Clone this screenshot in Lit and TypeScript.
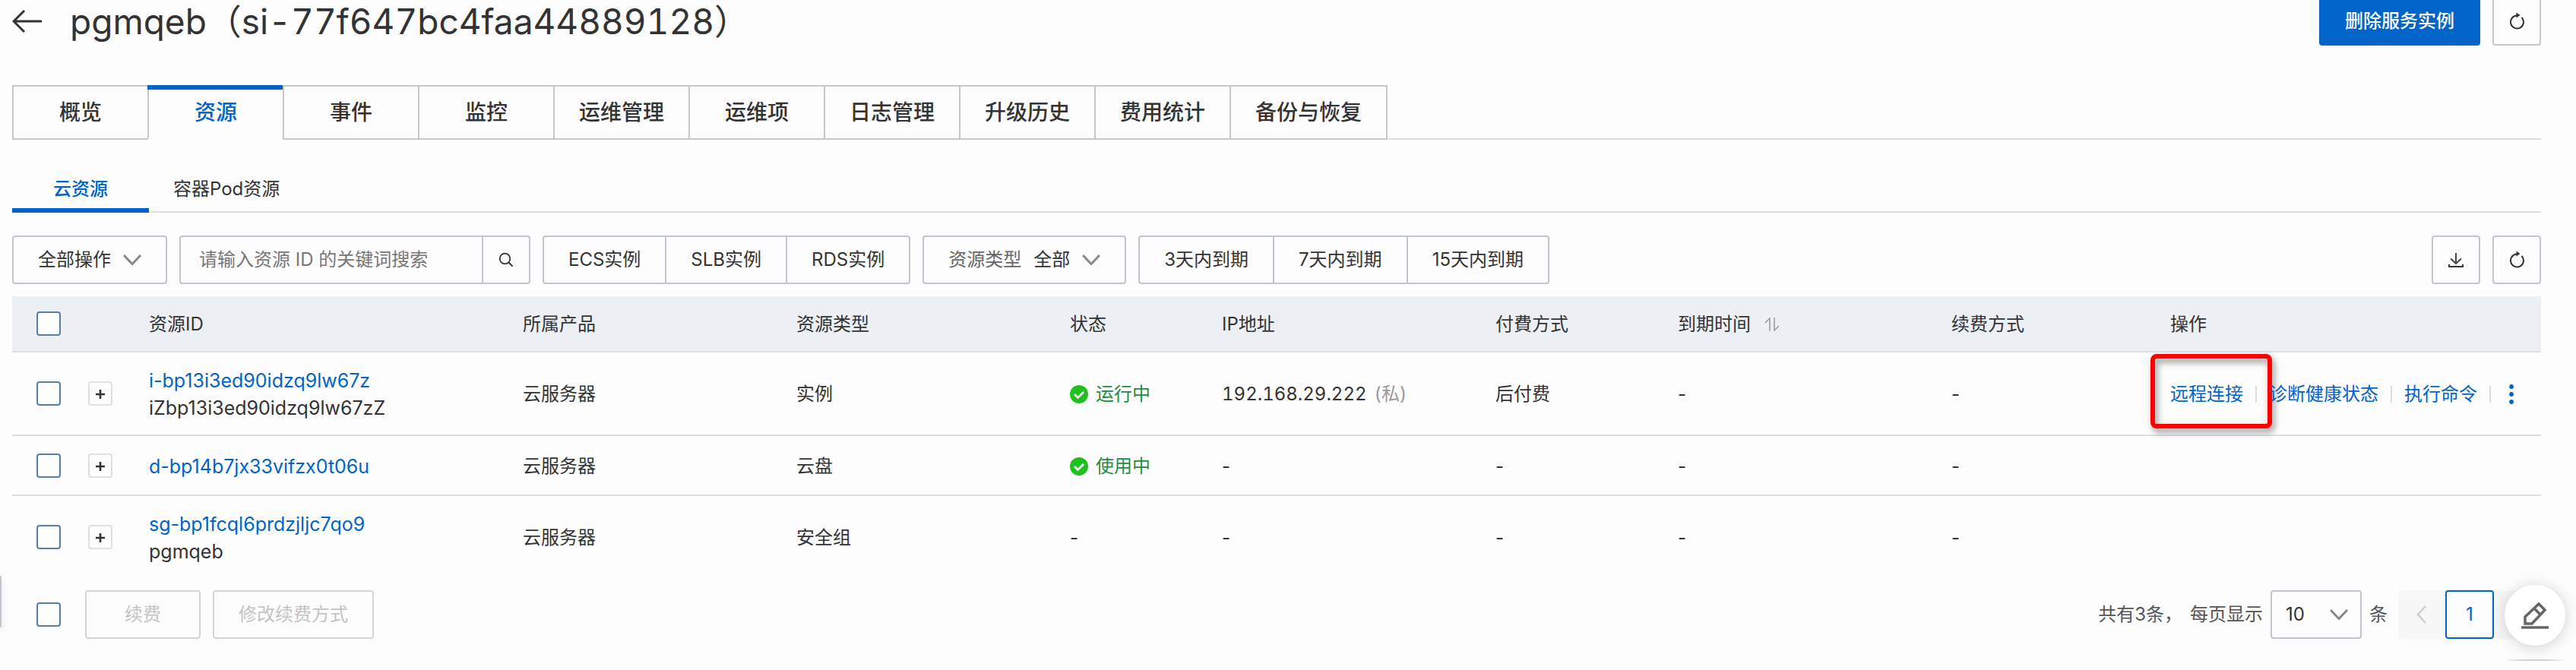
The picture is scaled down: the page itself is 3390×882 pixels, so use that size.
import { LitElement, html, css, svg, nothing } from "lit";
import { customElement, state } from "lit/decorators.js";
import { classMap } from "lit/directives/class-map.js";

interface Resource {
  id: string;
  name?: string;
  type: string;
  status?: string;
  ip?: string;
  charge?: string;
  actions?: string[];
}

const TABS = ["概览", "资源", "事件", "监控", "运维管理", "运维项", "日志管理", "升级历史", "费用统计", "备份与恢复"];
const SUB_TABS = ["云资源", "容器Pod资源"];
const PRODUCTS = ["ECS实例", "SLB实例", "RDS实例"];
const EXPIRY = ["3天内到期", "7天内到期", "15天内到期"];

const RESOURCES: Resource[] = [
  {
    id: "i-bp13i3ed90idzq9lw67z",
    name: "iZbp13i3ed90idzq9lw67zZ",
    type: "实例",
    status: "运行中",
    ip: "192.168.29.222",
    charge: "后付费",
    actions: ["远程连接", "诊断健康状态", "执行命令"],
  },
  { id: "d-bp14b7jx33vifzx0t06u", type: "云盘", status: "使用中" },
  { id: "sg-bp1fcql6prdzjljc7qo9", name: "pgmqeb", type: "安全组" },
];

const icon = (w: number, h: number, body: unknown) => html`
  <svg width=${w} height=${h} viewBox="0 0 ${w} ${h}" fill="none" aria-hidden="true">${body}</svg>
`;

const backIcon = icon(40, 32, svg`
  <path d="M16 2 L2 16 L16 30 M2 16 H39" stroke="#333" stroke-width="3" />`);
const chevronDown = icon(24, 14, svg`
  <path d="M1 1 L12 12.500 L23 1" stroke="#888" stroke-width="3" />`);
const chevronLeft = icon(14, 24, svg`
  <path d="M12 1 L2 12 L12 23" stroke="#ccc" stroke-width="2.500" />`);
const refreshIcon = icon(20, 24, svg`
  <path d="M16.500 7 A8.500 8.500 0 1 1 10 4.500" stroke="#333" stroke-width="2" />
  <path d="M9.500 0.500 L14.500 4 L9.500 7.500 Z" fill="#333" />`);
const downloadIcon = icon(20, 20, svg`
  <path d="M10 1 V15 M3 8.500 L10 15 L17 8.500" stroke="#444" stroke-width="2" />
  <path d="M1 16 V19 H19 V16" stroke="#333" stroke-width="2" />`);
const searchIcon = icon(20, 20, svg`
  <circle cx="8.500" cy="8.500" r="6.800" stroke="#333" stroke-width="1.800" />
  <path d="M13.500 13.500 L18.500 18.500" stroke="#333" stroke-width="1.800" />`);
const plusIcon = icon(12, 14, svg`
  <path d="M6 1 V13 M0 7 H12" stroke="#333" stroke-width="2.600" />`);
const sortIcon = icon(20, 20, svg`
  <path d="M1 8 L7 2 V19 M19 12 L13 18 V1" stroke="#999" stroke-width="1.500" />`);
const okIcon = icon(24, 24, svg`
  <circle cx="12" cy="12" r="12" fill="#1fc11f" />
  <path d="M6 12 L10.500 16.500 L18 9" stroke="#fff" stroke-width="2.600" />`);
const moreIcon = icon(6, 26, svg`
  <circle cx="3" cy="3" r="2.900" fill="#0064c8" />
  <circle cx="3" cy="13" r="2.900" fill="#0064c8" />
  <circle cx="3" cy="23" r="2.900" fill="#0064c8" />`);
const pencilIcon = icon(36, 36, svg`
  <path d="M5 29 V20 L23 3 L31 11 L14 29 Z M17 9 L25 17" stroke="#666" stroke-width="3.500" />
  <path d="M0 34 H36" stroke="#666" stroke-width="3.500" />`);

@customElement("app-root")
export class AppRoot extends LitElement {
  @state() private tab = 1;
  @state() private subTab = 0;

  static styles = css`
    :host {
      --blue: #0064c8;
      --text: #333;
      --line: #dedede;
      --field: #c0c6cf;
      --page: #fdfdfd;
      display: block;
      position: relative;
      box-sizing: border-box;
      min-height: 100vh;
      padding: 0 46px 0 16px;
      overflow: hidden;
      background: var(--page);
      color: var(--text);
      font: 24px/36px Inter, "Noto Sans CJK SC", sans-serif;
    }
    * { box-sizing: border-box; }
    svg { display: block; flex: none; }
    button, input, select {
      margin: 0;
      font: inherit;
      color: inherit;
    }
    button { cursor: pointer; }
    a { color: var(--blue); text-decoration: none; }

    .header {
      display: flex;
      align-items: center;
      gap: 16px;
      height: 64px;
      margin: -4px 0 52px;
    }
    .back {
      display: flex;
      padding: 0;
      margin-right: 20px;
      border: 0;
      background: none;
    }
    .title {
      flex: 1;
      margin: 0;
      font-size: 46px;
      line-height: 60px;
      font-weight: 400;
      font-variant-numeric: tabular-nums;
    }

    .btn {
      display: flex;
      align-items: center;
      justify-content: center;
      gap: 16px;
      height: 64px;
      padding: 0 32px;
      border: 2px solid var(--field);
      border-radius: 4px;
      background: var(--page);
      white-space: nowrap;
    }
    .primary {
      border-color: var(--blue);
      background: var(--blue);
      color: #fff;
      font-weight: 500;
    }
    .square { width: 64px; padding: 0; }
    .grey { border-color: #c8c8c8; }
    .btn:disabled {
      min-width: 152px;
      border-color: #d2d6db;
      color: #c4c4c4;
    }

    .tabs {
      display: flex;
      border-bottom: 2px solid var(--line);
    }
    .tab {
      position: relative;
      height: 72px;
      min-width: 180px;
      padding: 0 32px;
      margin: 0 0 -2px -2px;
      border: 2px solid #c8c8c8;
      background: var(--page);
      font-size: 28px;
      font-weight: 500;
      white-space: nowrap;
    }
    .tab:first-child { margin-left: 0; }
    .tab.active {
      border-bottom-color: var(--page);
      color: var(--blue);
    }
    .tab.active::before {
      content: "";
      position: absolute;
      inset: -2px -2px auto;
      height: 6px;
      background: var(--blue);
    }

    .subtabs {
      display: flex;
      margin-top: 32px;
      border-bottom: 2px solid var(--line);
    }
    .subtab {
      height: 64px;
      min-width: 180px;
      margin-bottom: -2px;
      padding: 8px 32px 0;
      border: 0;
      border-bottom: 6px solid transparent;
      background: none;
    }
    .subtab.active {
      border-color: var(--blue);
      color: var(--blue);
      font-weight: 500;
    }

    .toolbar {
      display: flex;
      gap: 16px;
      margin: 30px 0 16px;
    }
    .search {
      display: flex;
      width: 462px;
      height: 64px;
      border: 2px solid var(--field);
      border-radius: 4px;
    }
    .search-input {
      flex: 1;
      min-width: 0;
      padding: 0 24px;
      border: 0;
      background: none;
    }
    .search-input::placeholder { color: #777; opacity: 1; }
    .search-button {
      display: flex;
      align-items: center;
      justify-content: center;
      width: 62px;
      padding: 0;
      border: 0;
      border-left: 2px solid var(--field);
      background: none;
    }
    .group { display: flex; }
    .group .btn { border-radius: 0; margin-left: -2px; }
    .group .btn:first-child { margin-left: 0; border-radius: 4px 0 0 4px; }
    .group .btn:last-child { border-radius: 0 4px 4px 0; }
    .hint { color: #666; }
    .select {
      appearance: none;
      padding: 0;
      border: 0;
      outline: 0;
      background: none;
    }
    .spacer { flex: 1; }

    .table {
      width: 100%;
      table-layout: fixed;
      border-collapse: separate;
      border-spacing: 0;
      text-align: left;
    }
    .c-check { width: 84px; }
    .c-expand { width: 64px; }
    .c-id { width: 492px; }
    .c-wide { width: 360px; }
    .c-status { width: 200px; }
    .c-charge { width: 240px; }
    .c-renew { width: 288px; }
    th, td {
      height: 79px;
      padding: 2px 0 0 32px;
      border-bottom: 2px solid var(--line);
      font-weight: 400;
      white-space: nowrap;
    }
    th { height: 74px; background: #ecf0f5; }
    tr.named td { height: 110px; }
    tbody tr:last-child td { height: 108px; border-bottom: 0; }
    th:first-child, td:first-child { padding-top: 0; }
    td.expand-cell { padding: 0 0 0 16px; }
    .line { display: block; font-size: 25px; }
    .check {
      display: block;
      appearance: none;
      width: 32px;
      height: 32px;
      border: 2px solid #557fa8;
      border-radius: 4px;
      background: #fff;
    }
    .expand {
      display: flex;
      align-items: center;
      justify-content: center;
      width: 32px;
      height: 32px;
      padding: 2px 0 0;
      border: 2px solid #e0e0e0;
      border-radius: 4px;
      background: none;
    }
    .inline { display: flex; align-items: center; gap: 10px; }
    .ip { font-variant-numeric: tabular-nums; }
    .status { color: #1e8e3e; }
    .private { color: #999; }
    .sort {
      display: flex;
      align-items: center;
      gap: 18px;
      padding: 0;
      border: 0;
      background: none;
    }
    .actions { display: flex; align-items: center; }
    .action {
      display: flex;
      align-items: center;
    }
    .action::after {
      content: "";
      width: 2px;
      height: 22px;
      margin: 0 16px;
      background: var(--line);
    }
    .more {
      display: flex;
      padding: 0;
      margin-left: 8px;
      border: 0;
      background: none;
    }
    .target { position: relative; }
    .marker {
      position: absolute;
      left: -26px;
      top: -35px;
      width: 160px;
      height: 98px;
      border: 6px solid #f00;
      border-radius: 8px;
      filter: drop-shadow(3px 5px 4px rgba(0, 0, 0, 0.45));
      pointer-events: none;
    }

    .footer {
      display: flex;
      align-items: center;
      gap: 16px;
      padding-left: 32px;
      margin-top: 16px;
    }
    .footer .check { margin-right: 16px; }
    .pager {
      display: flex;
      align-items: center;
      gap: 10px;
      margin-left: auto;
      color: #555;
    }
    .size {
      position: relative;
      display: flex;
      align-items: center;
    }
    .size-select {
      appearance: none;
      width: 120px;
      height: 64px;
      padding: 0 18px;
      border: 2px solid var(--field);
      border-radius: 4px;
      background: none;
      color: var(--text);
    }
    .size svg {
      position: absolute;
      right: 18px;
      pointer-events: none;
    }
    .pages { display: flex; margin-left: 4px; }
    .page {
      display: flex;
      align-items: center;
      justify-content: center;
      width: 62px;
      height: 64px;
      padding: 0;
      border: 0;
      background: #f7f7f7;
    }
    .page.current {
      width: 64px;
      border: 2px solid var(--blue);
      border-radius: 4px;
      background: var(--page);
      color: var(--blue);
    }

    .fab {
      position: absolute;
      right: 14px;
      bottom: 32px;
      display: flex;
      align-items: center;
      justify-content: center;
      width: 80px;
      height: 80px;
      padding: 0;
      border: 0;
      border-radius: 50%;
      background: #fff;
      box-shadow: 0 2px 20px rgba(0, 0, 0, 0.18);
    }
    .dock {
      position: absolute;
      right: 14px;
      bottom: 12px;
      width: 80px;
      height: 2px;
      background: linear-gradient(90deg, transparent, #ccd3da 30%, #ccd3da 70%, transparent);
    }
    .handle {
      position: absolute;
      left: 0;
      bottom: 56px;
      width: 2px;
      height: 68px;
      border-radius: 0 2px 2px 0;
      background: #c0c6cf;
      box-shadow: 0 4px 8px rgba(0, 0, 0, 0.2);
    }
  `;

  private renderRow(r: Resource) {
    return html`
      <tr class=${classMap({ named: !!r.name })}>
        <td><input class="check" type="checkbox" aria-label=${r.id} /></td>
        <td class="expand-cell"><button class="expand" aria-label="展开">${plusIcon}</button></td>
        <td>
          <a class="line" href="#">${r.id}</a>
          ${r.name ? html`<span class="line">${r.name}</span>` : nothing}
        </td>
        <td>云服务器</td>
        <td>${r.type}</td>
        <td>${r.status ? html`<span class="inline status">${okIcon}${r.status}</span>` : "-"}</td>
        <td>
          ${r.ip ? html`<span class="inline ip">${r.ip}<span class="private">(私)</span></span>` : "-"}
        </td>
        <td>${r.charge ?? "-"}</td>
        <td>-</td>
        <td>-</td>
        <td>
          ${r.actions
            ? html`<div class="actions">
                ${r.actions.map(
                  (a, i) => html`<span class="action target"
                    ><a href="#">${a}</a>${i === 0 ? html`<span class="marker"></span>` : nothing}</span
                  >`
                )}
                <button class="more" aria-label="更多">${moreIcon}</button>
              </div>`
            : nothing}
        </td>
      </tr>
    `;
  }

  render() {
    return html`
      <header class="header">
        <button class="back" aria-label="返回">${backIcon}</button>
        <h1 class="title">pgmqeb（si-77f647bc4faa44889128）</h1>
        <button class="btn primary">删除服务实例</button>
        <button class="btn square grey" aria-label="刷新">${refreshIcon}</button>
      </header>

      <nav class="tabs" role="tablist">
        ${TABS.map(
          (t, i) => html`<button
            class=${classMap({ tab: true, active: i === this.tab })}
            role="tab"
            aria-selected=${i === this.tab}
            @click=${() => (this.tab = i)}
          >${t}</button>`
        )}
      </nav>
      <nav class="subtabs" role="tablist">
        ${SUB_TABS.map(
          (t, i) => html`<button
            class=${classMap({ subtab: true, active: i === this.subTab })}
            role="tab"
            aria-selected=${i === this.subTab}
            @click=${() => (this.subTab = i)}
          >${t}</button>`
        )}
      </nav>

      <div class="toolbar">
        <button class="btn">全部操作${chevronDown}</button>
        <div class="search">
          <input class="search-input" type="text" aria-label="搜索" placeholder="请输入资源 ID 的关键词搜索" />
          <button class="search-button" aria-label="搜索">${searchIcon}</button>
        </div>
        <div class="group">${PRODUCTS.map((p) => html`<button class="btn">${p}</button>`)}</div>
        <label class="btn">
          <span class="hint">资源类型</span>
          <select class="select"><option>全部</option></select>
          ${chevronDown}
        </label>
        <div class="group">${EXPIRY.map((p) => html`<button class="btn">${p}</button>`)}</div>
        <span class="spacer"></span>
        <button class="btn square" aria-label="下载">${downloadIcon}</button>
        <button class="btn square" aria-label="刷新">${refreshIcon}</button>
      </div>

      <table class="table">
        <thead>
          <tr>
            <th class="c-check"><input class="check" type="checkbox" aria-label="全选" /></th>
            <th class="c-expand"></th>
            <th class="c-id">资源ID</th>
            <th class="c-wide">所属产品</th>
            <th class="c-wide">资源类型</th>
            <th class="c-status">状态</th>
            <th class="c-wide">IP地址</th>
            <th class="c-charge">付費方式</th>
            <th class="c-wide"><button class="sort">到期时间${sortIcon}</button></th>
            <th class="c-renew">续费方式</th>
            <th>操作</th>
          </tr>
        </thead>
        <tbody>${RESOURCES.map((r) => this.renderRow(r))}</tbody>
      </table>

      <footer class="footer">
        <input class="check" type="checkbox" aria-label="全选" />
        <button class="btn" disabled>续费</button>
        <button class="btn" disabled>修改续费方式</button>
        <div class="pager">
          <span>共有3条，</span>
          <label for="size">每页显示</label>
          <span class="size">
            <select class="size-select" id="size"><option>10</option></select>
            ${chevronDown}
          </span>
          <span>条</span>
          <div class="pages">
            <button class="page" aria-label="上一页">${chevronLeft}</button>
            <button class="page current">1</button>
            <button class="page" aria-label="下一页"></button>
          </div>
        </div>
      </footer>

      <button class="fab" aria-label="编辑">${pencilIcon}</button>
      <span class="dock"></span>
      <span class="handle"></span>
    `;
  }
}
